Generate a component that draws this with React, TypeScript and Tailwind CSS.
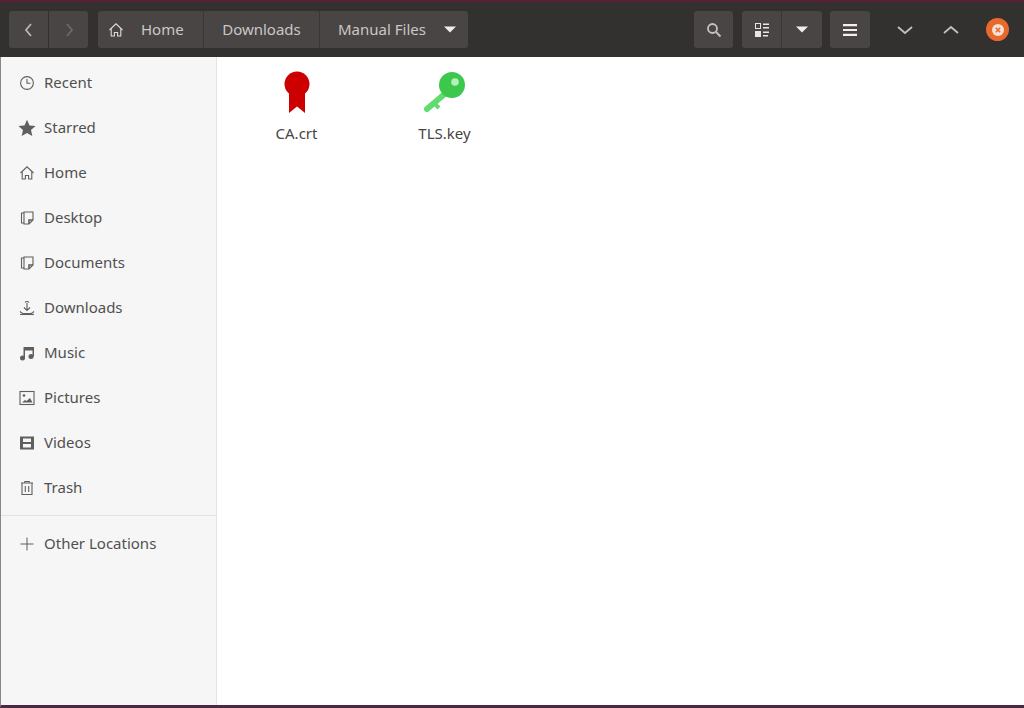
const fontStack = "font-['Noto_Sans','Open_Sans',sans-serif]";

function Ico({ children, className = "" }: { children: React.ReactNode; className?: string }) {
  return (
    <svg viewBox="0 0 16 16" width="16" height="16" fill="none" stroke="currentColor" strokeWidth="1.1" className={className}>
      {children}
    </svg>
  );
}

const HomeIcon = () => (
  <Ico>
    <path d="M1.500 8 8 1.800 14.500 8" />
    <path d="M3.200 7v7h3.200v-3.500h3.200V14h3.200V7" />
  </Ico>
);

const DocIcon = () => (
  <Ico>
    <path d="M5 2h9v8l-4 4H5z" />
    <path d="M5 3H2.500v10H5" />
    <path d="M14 10h-4v4" strokeWidth="1.600" />
  </Ico>
);

const sideItems: { label: string; icon: React.ReactNode }[] = [
  {
    label: "Recent",
    icon: (
      <Ico>
        <circle cx="8" cy="8" r="6.400" />
        <path d="M8 4v4.200h3.400" />
      </Ico>
    ),
  },
  {
    label: "Starred",
    icon: (
      <svg viewBox="0 0 18 18" width="18" height="18" fill="currentColor" className="shrink-0">
        <path d="M9 .8l2.500 5.600 6.100.6-4.600 4.100 1.300 6L9 14l-5.300 3.100 1.300-6L.4 7l6.100-.6z" />
      </svg>
    ),
  },
  { label: "Home", icon: <HomeIcon /> },
  { label: "Desktop", icon: <DocIcon /> },
  { label: "Documents", icon: <DocIcon /> },
  {
    label: "Downloads",
    icon: (
      <Ico>
        <path d="M6 2.500a2.500 2.500 0 0 1 4 0" />
        <path d="M8 3v7M5 7.500 8 10.500l3-3" />
        <path d="M1 11.500c1.500 1.500 3 2 3 2h8s1.500-.5 3-2" />
        <path d="M1 14.500h14" />
      </Ico>
    ),
  },
  {
    label: "Music",
    icon: (
      <svg viewBox="0 0 16 16" width="16" height="16" fill="currentColor">
        <path d="M4.500 2H15v9.500h-1.500V5.500H6V13H4.500z" />
        <circle cx="3.500" cy="13" r="2.500" />
        <circle cx="12" cy="11.500" r="2.500" />
      </svg>
    ),
  },
  {
    label: "Pictures",
    icon: (
      <Ico>
        <rect x="1" y="1.500" width="14" height="13" />
        <circle cx="5" cy="5.500" r="1.300" fill="currentColor" stroke="none" />
        <path d="M3 12.500 6 10l1.500 1L11 8l2.500 4.500z" fill="currentColor" stroke="none" />
      </Ico>
    ),
  },
  {
    label: "Videos",
    icon: (
      <svg viewBox="0 0 16 16" width="16" height="16" fill="currentColor">
        <path fillRule="evenodd" d="M1 1.500h14v13H1zM4 3.500v3.500h8V3.500zM4 9v3.500h8V9z" />
      </svg>
    ),
  },
  {
    label: "Trash",
    icon: (
      <Ico>
        <path d="M2 3h12M5.800 3V1.500h4.400V3" />
        <path d="M3 3v11.500h10V3" />
        <path d="M6.300 6v6M9.700 6v6" />
      </Ico>
    ),
  },
];

function SideRow({ label, icon }: { label: string; icon: React.ReactNode }) {
  return (
    <div className="flex h-[45px] items-center">
      <div className="ml-[18px] mr-[9px] flex w-[16px] justify-center text-[#5f5f5f]">{icon}</div>
      <span className="text-[15px] text-[#505050]">{label}</span>
    </div>
  );
}

function Chevron({ dir, className = "" }: { dir: "left" | "right" | "down" | "up"; className?: string }) {
  const d = {
    left: "M11 3 6 9l5 6",
    right: "M7 3l5 6-5 6",
    down: "M2 6l7 6 7-6",
    up: "M2 12l7-6 7 6",
  }[dir];
  return (
    <svg viewBox="0 0 18 18" width="18" height="18" fill="none" stroke="currentColor" strokeWidth="1.800" className={className}>
      <path d={d} />
    </svg>
  );
}

const Caret = () => (
  <svg viewBox="0 0 12 7" width="12" height="7" fill="#eeeeee">
    <path d="M0 .5h12L6 6.500z" />
  </svg>
);

const btn = "flex h-[37px] items-center justify-center bg-[#4a4545]";

export default function App() {
  return (
    <div className={`flex h-[708px] w-[1024px] flex-col overflow-hidden bg-white ${fontStack}`}>
      {/* Title bar */}
      <header className="flex h-[57px] shrink-0 items-center border-t-2 border-[#5b1f3a] bg-[#333030] pl-[9px]">
        <div className="flex gap-px">
          <button className={`${btn} w-[39px] rounded-l-[3px] text-[#b9b6b6]`}>
            <Chevron dir="left" />
          </button>
          <button className={`${btn} w-[39px] rounded-r-[3px] bg-[#3f3b3b] text-[#6d6a6a]`}>
            <Chevron dir="right" />
          </button>
        </div>

        {/* Path bar */}
        <div className="ml-[10px] flex h-[37px] w-[370px] text-[15px] text-[#c9c7c7]">
          <div className={`${btn} w-[106px] justify-start rounded-l-[3px] border-r border-[#3a3636] pl-[10px]`}>
            <span className="text-[#dddddd]">
              <HomeIcon />
            </span>
            <span className="ml-[17px]">Home</span>
          </div>
          <div className={`${btn} w-[116px] border-r border-[#3a3636]`}>Downloads</div>
          <div className={`${btn} w-[148px] justify-start rounded-r-[3px] pl-[18px]`}>
            <span>Manual Files</span>
            <span className="ml-[18px] flex">
              <Caret />
            </span>
          </div>
        </div>

        <div className="flex-1" />

        <button className={`${btn} w-[39px] rounded-[3px] text-[#c4c2c2]`}>
          <svg viewBox="0 0 16 16" width="16" height="16" fill="none" stroke="currentColor" strokeWidth="1.800">
            <circle cx="6.500" cy="6.500" r="4.500" />
            <path d="M10 10l4.500 4.500" />
          </svg>
        </button>

        <div className="ml-[9px] flex">
          <button className={`${btn} w-[40px] rounded-l-[3px] border-r border-[#3a3636] text-[#e6e6e6]`}>
            <svg viewBox="0 0 16 16" width="16" height="16" fill="currentColor">
              <path fillRule="evenodd" d="M1 1h6v6H1zM2 2v4h4V2z" />
              <path d="M9 1.500h6V3H9zM9 5h6v1.500H9zM1 9h6v6H1zM9 9.500h6V11H9zM9 13h5v1.500H9z" />
            </svg>
          </button>
          <button className={`${btn} w-[40px] rounded-r-[3px]`}>
            <Caret />
          </button>
        </div>

        <button className={`${btn} ml-[8px] w-[40px] rounded-[3px] text-[#f0f0f0]`}>
          <svg viewBox="0 0 16 16" width="16" height="16" fill="currentColor">
            <path d="M1 2h14v2.200H1zM1 6.900h14v2.200H1zM1 11.800h14V14H1z" />
          </svg>
        </button>

        <div className="ml-[25px] flex w-[19px] justify-center text-[#c2c0c0]">
          <Chevron dir="down" />
        </div>
        <div className="ml-[27px] flex w-[19px] justify-center text-[#c2c0c0]">
          <Chevron dir="up" />
        </div>

        <div className="ml-[26px] mr-[15px] flex h-[23px] w-[23px] items-center justify-center rounded-full bg-[#e9692c]">
          <svg viewBox="0 0 12 12" width="12" height="12">
            <circle cx="6" cy="6" r="6" fill="#f7e2d8" />
            <path d="M3.800 3.800l4.400 4.400M8.200 3.800 3.800 8.200" stroke="#e9692c" strokeWidth="1.600" />
          </svg>
        </div>
      </header>

      <div className="flex min-h-0 flex-1 border-b-[3px] border-l border-b-[#4a2a40] border-l-[#8d8389]">
        {/* Sidebar */}
        <aside className="flex w-[216px] shrink-0 flex-col border-r border-[#e4e4e4] bg-[#f6f6f6] pt-[3px]">
          {sideItems.map((item) => (
            <SideRow key={item.label} label={item.label} icon={item.icon} />
          ))}
          <div className="mt-[5px] border-t border-[#e2e2e2] pt-[5px]">
            <SideRow
              label="Other Locations"
              icon={
                <svg viewBox="0 0 16 16" width="16" height="16" fill="none" stroke="currentColor" strokeWidth="1">
                  <path d="M8 1.500v13M1.500 8h13" />
                </svg>
              }
            />
          </div>
        </aside>

        {/* Files */}
        <main className="flex flex-1 items-start pl-[32px] pt-[13px] text-[15px] text-[#454545]">
          <div className="flex w-[95px] flex-col items-center">
            <svg viewBox="0 0 48 48" width="48" height="48" className="text-[#cc0000]" fill="currentColor">
              <circle cx="24" cy="14" r="12.500" />
              <path d="M16 20h16v23L24 36.500 16 43z" />
            </svg>
            <span className="mt-[4px]">CA.crt</span>
          </div>
          <div className="ml-[53px] flex w-[95px] flex-col items-center">
            <svg viewBox="0 0 48 48" width="48" height="48">
              <path d="M26 22 6 39" stroke="#62dc70" strokeWidth="6" strokeLinecap="round" />
              <path d="M13 33l5 5" stroke="#62dc70" strokeWidth="4" />
              <circle cx="31" cy="15" r="13" fill="#3cc84d" />
              <circle cx="34" cy="12" r="3.800" fill="#b5f0ba" />
            </svg>
            <span className="mt-[4px]">TLS.key</span>
          </div>
        </main>
      </div>
    </div>
  );
}
